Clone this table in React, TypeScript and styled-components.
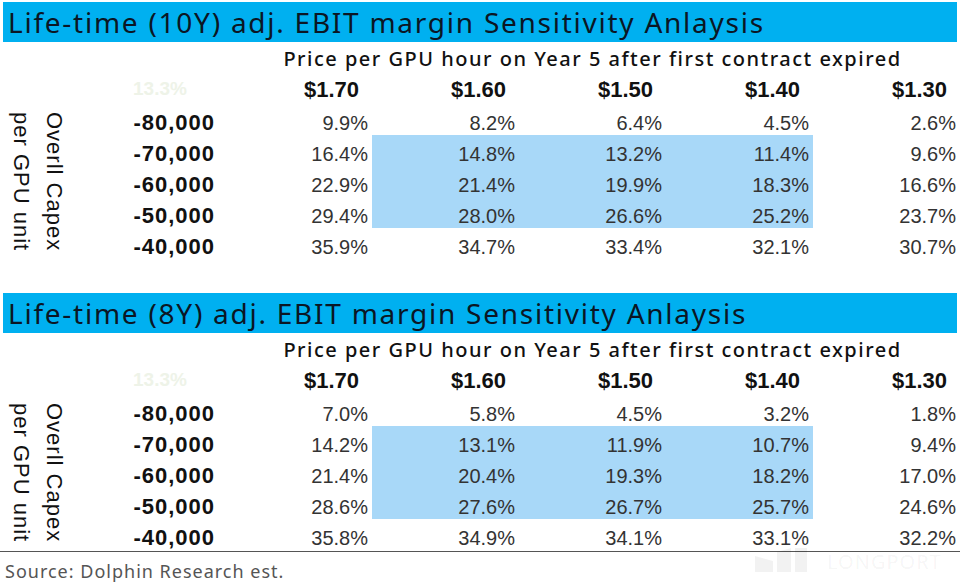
import React from "react";
import styled, { createGlobalStyle } from "styled-components";

const GlobalStyle = createGlobalStyle`
  html, body {
    margin: 0;
    padding: 0;
    background: #ffffff;
  }
`;

const Page = styled.div`
  position: relative;
  width: 960px;
  padding-top: 2px;
  font-family: "Liberation Sans", Arial, sans-serif;
  color: #111;
`;

const Section = styled.section`
  & + & {
    margin-top: 34px;
  }
`;

const TitleBar = styled.h2`
  margin: 0 3px;
  height: 40px;
  padding-left: 5px;
  background: #00b0f0;
  color: #0b1624;
  font: 400 28px/40px "Noto Sans", "Open Sans", sans-serif;
  letter-spacing: 1.75px;
  white-space: nowrap;
`;

const Grid = styled.div`
  display: grid;
  grid-template-columns: 70px 155px repeat(5, 147px);
  grid-auto-rows: 31px;
`;

const SubHeader = styled.div`
  grid-row: 1;
  grid-column: 3 / span 5;
  display: flex;
  align-items: flex-end;
  justify-content: center;
  padding-bottom: 2px;
  font: 500 20px/24px "Noto Sans", "Open Sans", sans-serif;
  letter-spacing: 1.5px;
  color: #111;
  white-space: nowrap;
`;

const Ghost = styled.div`
  grid-row: 2;
  grid-column: 2;
  display: flex;
  align-items: flex-end;
  padding: 0 0 4px 63px;
  font: 700 19px/22px "Liberation Sans", Arial, sans-serif;
  color: #eef3e8;
`;

const Price = styled.div<{ $col: number }>`
  grid-row: 2;
  grid-column: ${(p) => p.$col};
  display: flex;
  align-items: flex-end;
  justify-content: flex-end;
  padding: 0 13px 2px 0;
  font: 700 22px/24px "Liberation Sans", Arial, sans-serif;
  color: #111;
`;

const AxisLabel = styled.div`
  grid-column: 1;
  grid-row: 3 / span 5;
  justify-self: start;
  margin-left: 5px;
  writing-mode: vertical-rl;
  text-align: center;
  font: 400 22px/33px "Liberation Sans", Arial, sans-serif;
  letter-spacing: 1px;
  color: #111;
`;

const RowLabel = styled.div<{ $row: number }>`
  grid-row: ${(p) => p.$row};
  grid-column: 2;
  display: flex;
  align-items: flex-end;
  justify-content: flex-end;
  padding: 0 10px 1px 0;
  font: 700 22px/22px "Liberation Sans", Arial, sans-serif;
  letter-spacing: 1px;
  color: #111;
`;

const Cell = styled.div<{ $row: number; $col: number; $hi?: boolean }>`
  grid-row: ${(p) => p.$row};
  grid-column: ${(p) => p.$col};
  display: flex;
  align-items: flex-end;
  justify-content: flex-end;
  padding: 0 4px 1px 0;
  background: ${(p) => (p.$hi ? "#a8d8f8" : "transparent")};
  font: 400 20px/22px "Liberation Sans", Arial, sans-serif;
  color: #333;
`;

const Footer = styled.footer`
  margin-top: 1px;
  border-top: 1px solid #555;
  padding: 6px 0 0 5px;
  font: 400 18px/26px "Noto Sans", "Open Sans", sans-serif;
  letter-spacing: 1px;
  color: #555;
`;

const Watermark = styled.div`
  position: absolute;
  left: 755px;
  top: 548px;
  display: flex;
  align-items: flex-end;
  gap: 20px;
  font: 400 20px/20px "Noto Sans", sans-serif;
  letter-spacing: 1px;
  color: rgba(0, 0, 0, 0.05);
  pointer-events: none;
`;

const prices = ["$1.70", "$1.60", "$1.50", "$1.40", "$1.30"];
const capex = ["-80,000", "-70,000", "-60,000", "-50,000", "-40,000"];

const tables = [
  {
    title: "Life-time (10Y) adj. EBIT margin Sensitivity Anlaysis",
    rows: [
      ["9.9%", "8.2%", "6.4%", "4.5%", "2.6%"],
      ["16.4%", "14.8%", "13.2%", "11.4%", "9.6%"],
      ["22.9%", "21.4%", "19.9%", "18.3%", "16.6%"],
      ["29.4%", "28.0%", "26.6%", "25.2%", "23.7%"],
      ["35.9%", "34.7%", "33.4%", "32.1%", "30.7%"],
    ],
  },
  {
    title: "Life-time (8Y) adj. EBIT margin Sensitivity Anlaysis",
    rows: [
      ["7.0%", "5.8%", "4.5%", "3.2%", "1.8%"],
      ["14.2%", "13.1%", "11.9%", "10.7%", "9.4%"],
      ["21.4%", "20.4%", "19.3%", "18.2%", "17.0%"],
      ["28.6%", "27.6%", "26.7%", "25.7%", "24.6%"],
      ["35.8%", "34.9%", "34.1%", "33.1%", "32.2%"],
    ],
  },
];

// highlighted block: middle three capex rows x middle three prices
const isHi = (r: number, c: number) => r >= 1 && r <= 3 && c >= 1 && c <= 3;

function SensitivityTable({ title, rows }: { title: string; rows: string[][] }) {
  return (
    <Section>
      <TitleBar>{title}</TitleBar>
      <Grid>
        <AxisLabel>
          Overll Capex
          <br />
          per GPU unit
        </AxisLabel>
        <SubHeader>Price per GPU hour on Year 5 after first contract expired</SubHeader>
        <Ghost>13.3%</Ghost>
        {prices.map((p, i) => (
          <Price key={p} $col={i + 3}>
            {p}
          </Price>
        ))}
        {rows.map((row, r) => (
          <React.Fragment key={capex[r]}>
            <RowLabel $row={r + 3}>{capex[r]}</RowLabel>
            {row.map((v, c) => (
              <Cell key={c} $row={r + 3} $col={c + 3} $hi={isHi(r, c)}>
                {v}
              </Cell>
            ))}
          </React.Fragment>
        ))}
      </Grid>
    </Section>
  );
}

export default function App() {
  return (
    <Page>
      <GlobalStyle />
      {tables.map((t) => (
        <SensitivityTable key={t.title} title={t.title} rows={t.rows} />
      ))}
      <Footer>Source: Dolphin Research est.</Footer>
      <Watermark>
        <svg width="52" height="24" viewBox="0 0 52 24">
          <path d="M0 24V8l18 5v11zM22 24V4l14-4v24zM40 24V0h12v24z" fill="currentColor" />
        </svg>
        <span>LONGPORT</span>
      </Watermark>
    </Page>
  );
}
